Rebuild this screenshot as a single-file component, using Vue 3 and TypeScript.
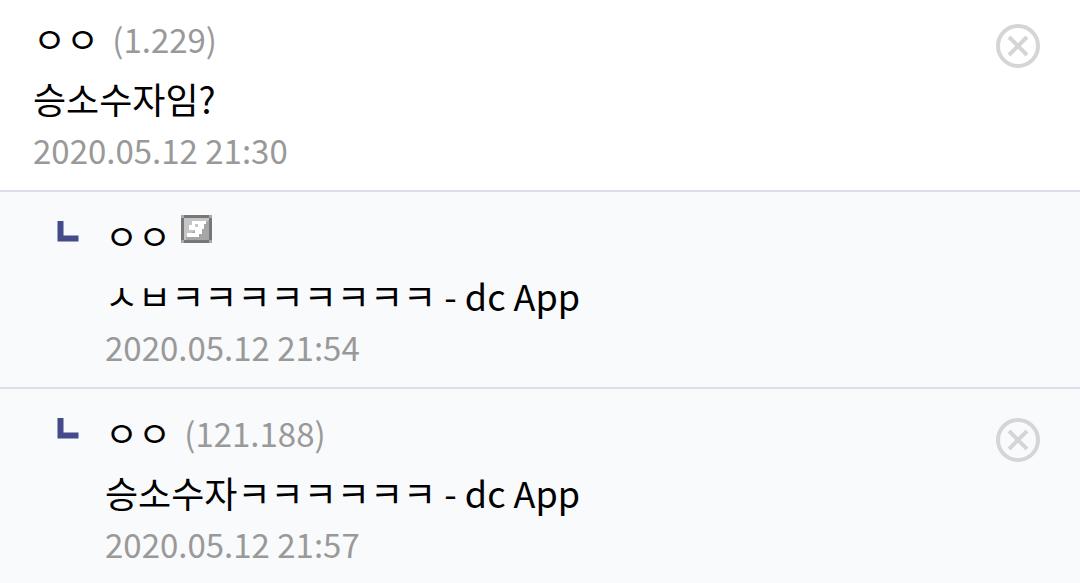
<script setup lang="ts">
interface Comment {
  id: number
  nick: string
  ip?: string
  text: string
  app?: boolean
  date: string
  reply: boolean
}

const comments: Comment[] = [
  { id: 1, nick: 'ㅇㅇ', ip: '(1.229)', text: '승소수자임?', date: '2020.05.12 21:30', reply: false },
  { id: 2, nick: 'ㅇㅇ', text: 'ㅅㅂㅋㅋㅋㅋㅋㅋㅋㅋ', app: true, date: '2020.05.12 21:54', reply: true },
  { id: 3, nick: 'ㅇㅇ', ip: '(121.188)', text: '승소수자ㅋㅋㅋㅋㅋㅋ', app: true, date: '2020.05.12 21:57', reply: true },
]
</script>

<template>
  <ul class="comments">
    <li v-for="c in comments" :key="c.id" class="comment" :class="{ reply: c.reply }">
      <svg v-if="c.reply" class="branch" viewBox="0 0 22 22" aria-hidden="true">
        <path d="M0.5 0h6v14.5h15v6h-21z" fill="#434b8b" />
      </svg>
      <div class="body">
        <div class="author">
          <span class="nick">{{ c.nick }}</span>
          <span v-if="c.ip" class="ip">{{ c.ip }}</span>
          <svg v-else class="badge" viewBox="0 0 31 28" aria-hidden="true">
            <path d="M3 0h25v3h3v22h-3v3H3v-3H0V3h3z" fill="#777" />
            <path d="M0 0h3v3H0zM28 0h3v3h-3zM0 25h3v3H0zM28 25h3v3h-3z" fill="#aaa" />
            <path d="M3 3h25v22H3z" fill="#a6a6a6" />
            <path d="M3 3h25v2L5 22v3H3z" fill="#c6c6c6" />
            <path d="M11 6h14v3h-2v5h-2v5h-3v3H6v-4h8v-3H8v-5h3zM14 9v3h3V9z" fill="#fff" fill-rule="evenodd" />
          </svg>
        </div>
        <p class="text">{{ c.text }}<template v-if="c.app"> - dc App</template></p>
        <time class="date">{{ c.date }}</time>
      </div>
      <button v-if="c.ip" class="remove" type="button" aria-label="삭제">
        <svg viewBox="0 0 44 44" aria-hidden="true">
          <circle cx="22" cy="22" r="20" />
          <path d="M13 13l18 18M31 13L13 31" />
        </svg>
      </button>
    </li>
  </ul>
</template>

<style>
body {
  margin: 0;
  background: #f9fafc;
}
</style>

<style scoped>
.comments {
  margin: 0;
  padding: 0;
  list-style: none;
  font-family: "Noto Sans CJK KR", sans-serif;
  font-size: 36px;
  color: #000;
}
.comment {
  display: flex;
  align-items: flex-start;
  padding: 12px 40px 18px 33px;
  background: #fff;
}
.reply {
  padding-top: 17px;
  padding-left: 57px;
  border-top: 2px solid #dcdde8;
  background: #f9fafc;
}
.branch {
  flex: none;
  width: 22px;
  height: 22px;
  margin: 12px 26px 0 0;
}
.body {
  flex: 1;
  min-width: 0;
}
.author {
  display: flex;
  gap: 13px;
  height: 52px;
  line-height: 52px;
}
.ip,
.date {
  font-size: 33px;
  line-height: 44px;
  color: #999;
}
.author .ip {
  line-height: 54px;
}
.badge {
  width: 31px;
  height: 28px;
  margin: 6px 0 0 -3px;
}
.text {
  margin: 4px 0 0;
  line-height: 60px;
}
.date {
  display: block;
}
.remove {
  flex: none;
  width: 44px;
  height: 44px;
  margin-top: 12px;
  padding: 0;
  border: 0;
  background: none;
}
.remove svg {
  display: block;
  fill: none;
  stroke: #d4d5d7;
  stroke-width: 4;
}
</style>
